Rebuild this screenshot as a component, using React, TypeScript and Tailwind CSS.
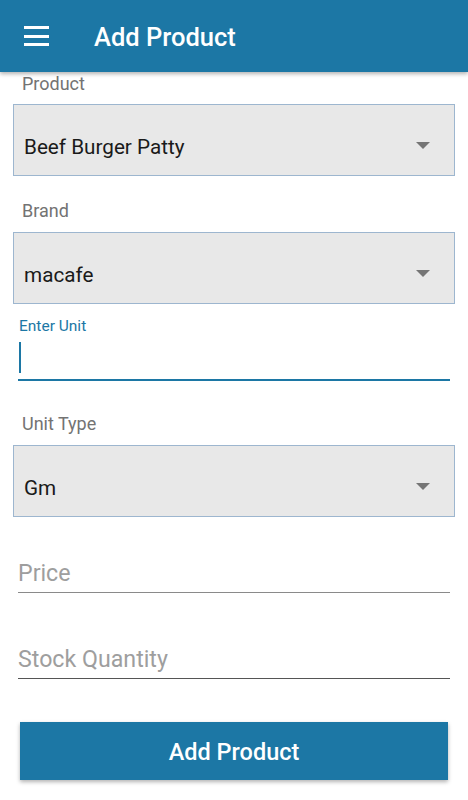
import React from "react";

function Select({ value }: { value: string }) {
  return (
    <div className="mx-[13px] h-[72px] bg-[#e8e8e8] border border-[#9db6cf] flex items-center justify-between pl-[10px] pr-[24px] pt-[16px]">
      <span className="text-[20.7px] text-[#1a1a1a]">{value}</span>
      <svg width="14" height="8" viewBox="0 0 14 8" className="mt-[-4px]">
        <path d="M0 0 L14 0 L7 7 Z" fill="#757575" />
      </svg>
    </div>
  );
}

export default function App() {
  return (
    <div className="w-[468px] h-[800px] bg-white overflow-hidden" style={{ fontFamily: "Roboto, 'Liberation Sans', sans-serif" }}>
      <div className="h-[72px] bg-[#1c77a5] flex items-center shadow-[0_2px_4px_rgba(0,0,0,0.3)] relative z-10">
        <div className="ml-[24px] w-[25px] flex flex-col gap-[5.5px]">
          <div className="h-[3px] bg-white" />
          <div className="h-[3px] bg-white" />
          <div className="h-[3px] bg-white" />
        </div>
        <span className="ml-[45px] mt-[3px] text-white text-[25.5px] font-medium">Add Product</span>
      </div>

      <div className="pl-[22px] h-[32px] text-[18px] text-[#737373] leading-[24px]">Product</div>
      <Select value="Beef Burger Patty" />

      <div className="pl-[22px] pt-[23px] h-[56px] text-[18px] text-[#737373] leading-[24px]">Brand</div>
      <Select value="macafe" />

      <div className="mx-[18px] mt-[13px]">
        <div className="text-[15.5px] text-[#1c77a5] pl-[1px] leading-[18px]">Enter Unit</div>
        <div className="h-[46px] flex items-center border-b-2 border-[#1c77a5] pt-[1px]">
          <div className="w-[2px] h-[31px] bg-[#1c77a5] ml-[1px]" />
        </div>
      </div>

      <div className="pl-[22px] pt-[31px] h-[64px] text-[18px] text-[#737373] leading-[24px]">Unit Type</div>
      <Select value="Gm" />

      <div className="mx-[18px] mt-[43px] h-[33px] border-b border-[#8a8a8a] text-[23.2px] text-[#9e9e9e] leading-[26px]">Price</div>
      <div className="mx-[18px] mt-[53px] h-[33px] border-b border-[#555] text-[23.2px] text-[#9e9e9e] leading-[26px]">Stock Quantity</div>

      <div className="mx-[20px] mt-[43px] h-[58px] bg-[#1c77a5] flex items-center justify-center pt-[3px] shadow-[0_2px_4px_rgba(0,0,0,0.3)]">
        <span className="text-white text-[23.5px] font-medium">Add Product</span>
      </div>
    </div>
  );
}
